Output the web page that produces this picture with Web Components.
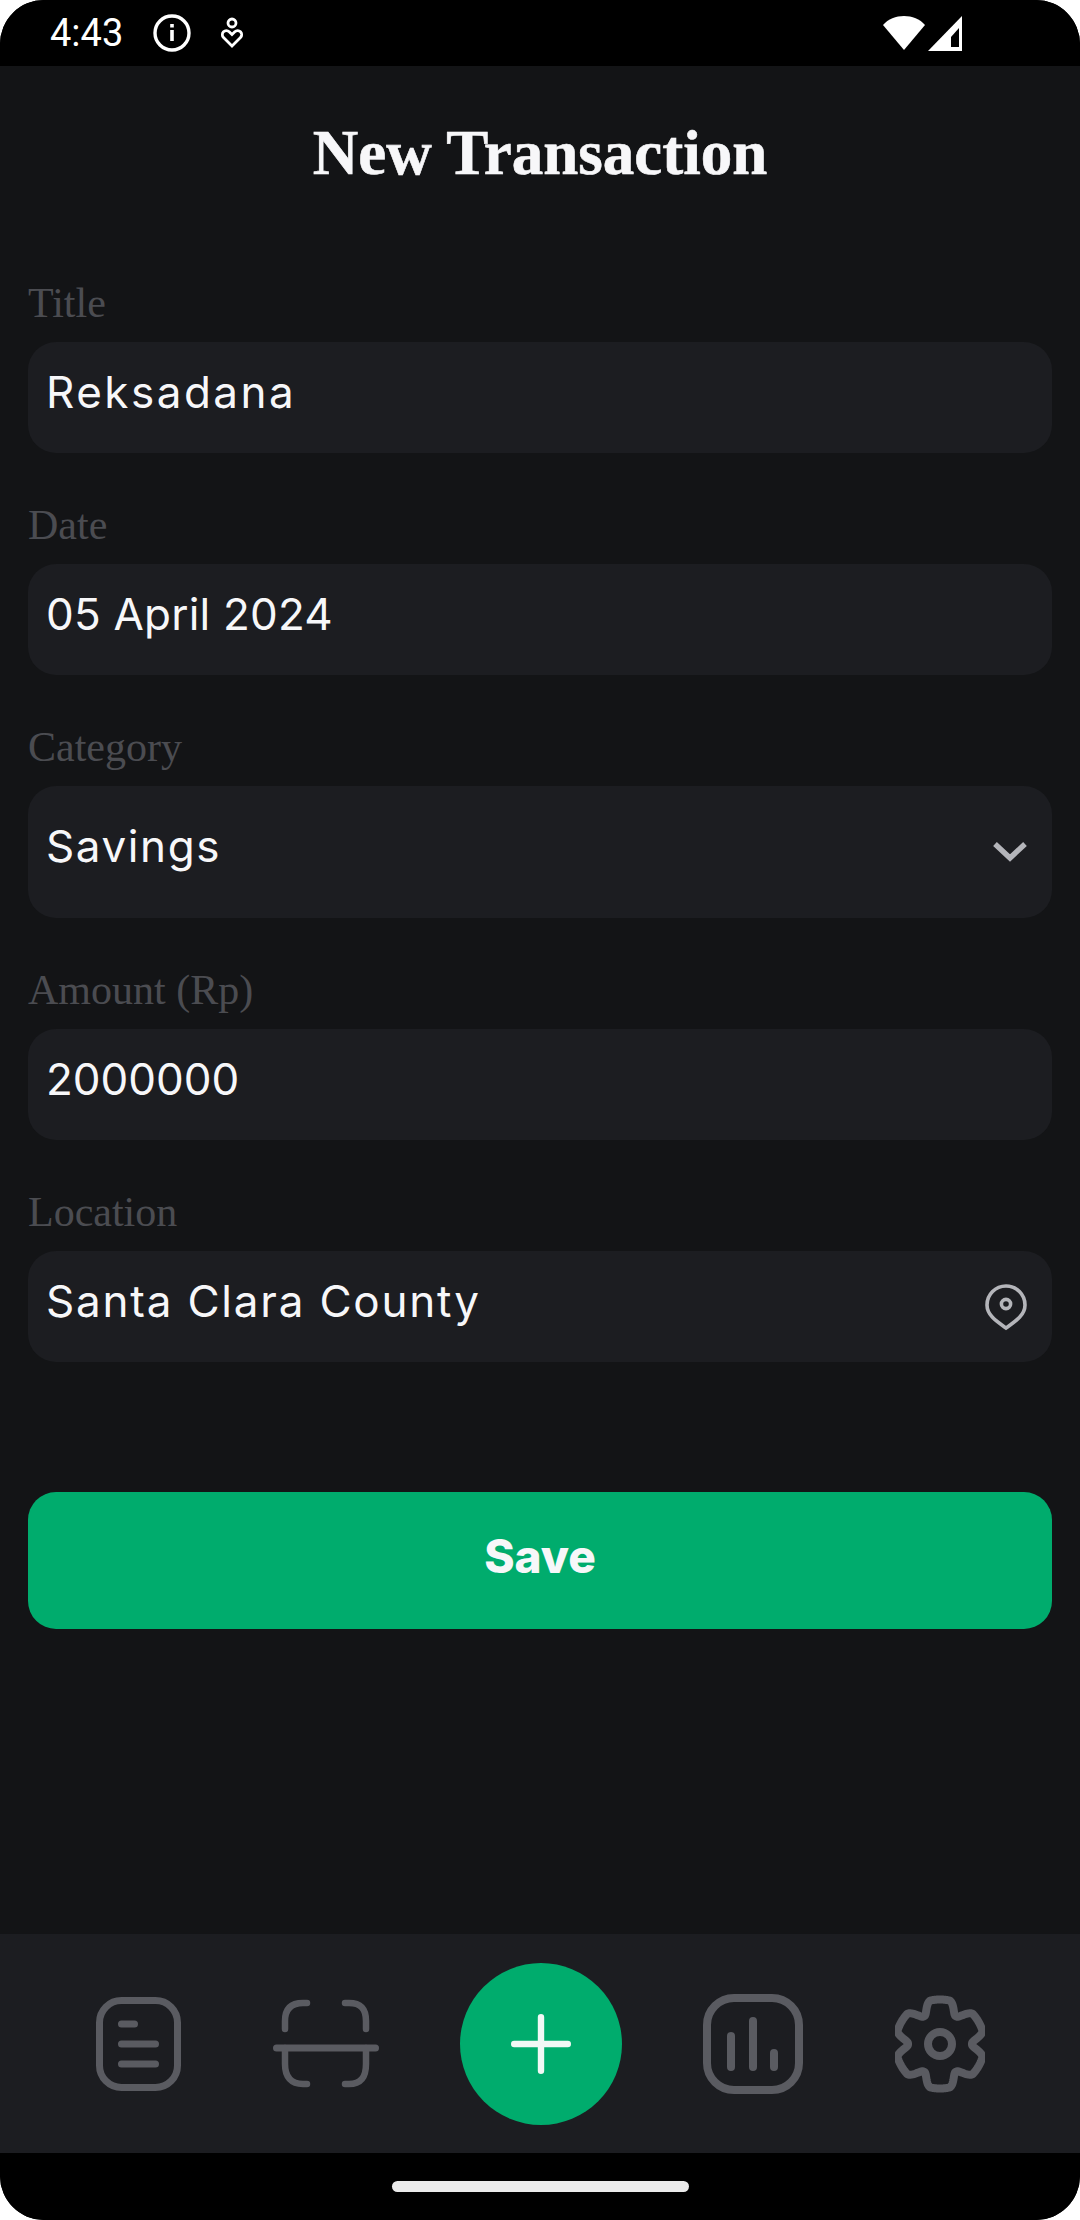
<!DOCTYPE html>
<html>
<head>
<meta charset="utf-8">
<title>New Transaction</title>
<style>
  html, body { margin: 0; padding: 0; background: #fff; }
  body { width: 1080px; height: 2220px; font-family: "Liberation Sans", sans-serif; }
</style>
</head>
<body>
<phone-frame>
  <status-bar slot="top"></status-bar>
  <screen-title>New Transaction</screen-title>
  <form-field label="Title" value="Reksadana" style="--tracking:2.5px"></form-field>
  <form-field label="Date" value="05 April 2024" style="--tracking:.2px"></form-field>
  <form-field label="Category" value="Savings" kind="select" style="--tracking:1.6px"></form-field>
  <form-field label="Amount (Rp)" value="2000000"></form-field>
  <form-field label="Location" value="Santa Clara County" kind="location" style="--tracking:1.8px"></form-field>
  <save-button>Save</save-button>
  <bottom-nav slot="bottom"></bottom-nav>
</phone-frame>

<script>
class PhoneFrame extends HTMLElement {
  constructor() {
    super();
    this.attachShadow({ mode: 'open' });
    this.shadowRoot.innerHTML = `
      <style>
        :host {
          display: flex;
          flex-direction: column;
          width: 1080px;
          height: 2220px;
          background: #000;
          border-radius: 44px;
          overflow: hidden;
        }
        .content {
          flex: 1;
          background: #131416;
          padding: 0 28px;
          display: flex;
          flex-direction: column;
        }
        .home {
          height: 67px;
          background: #000;
          display: flex;
          justify-content: center;
          padding-top: 28px;
          box-sizing: border-box;
        }
        .home div {
          width: 297px;
          height: 11px;
          border-radius: 6px;
          background: #ebebeb;
        }
      </style>
      <slot name="top"></slot>
      <div class="content"><slot></slot></div>
      <slot name="bottom"></slot>
      <div class="home"><div></div></div>
    `;
  }
}

class StatusBar extends HTMLElement {
  constructor() {
    super();
    this.attachShadow({ mode: 'open' });
    this.shadowRoot.innerHTML = `
      <style>
        :host {
          display: flex;
          align-items: center;
          height: 66px;
          padding: 0 118px 0 50px;
          background: #000;
          color: #fff;
          font: 400 38px Roboto, sans-serif;
        }
        svg { display: block; }
        .time { width: 102px; }
        .right { margin-left: auto; display: flex; align-items: center; gap: 3px; }
      </style>
      <span class="time">4:43</span>
      <svg width="40" height="40" viewBox="0 0 40 40" fill="none" stroke="#fff">
        <circle cx="20" cy="20" r="17" stroke-width="3.4"/>
        <path d="M20 17v11" stroke-width="3.6"/>
        <path d="M20 11v3.4" stroke-width="3.6"/>
      </svg>
      <svg width="24" height="32" viewBox="0 0 24 32" fill="none" stroke="#fff" stroke-width="2.8" style="margin-left:28px">
        <circle cx="12" cy="6" r="4"/>
        <path d="M12 29 3.5 20.5a4 4 0 0 1 5.7-5.7L12 17.5l2.8-2.7a4 4 0 0 1 5.7 5.7Z"/>
      </svg>
      <div class="right">
        <svg width="42" height="34" viewBox="0 0 42 34"><path d="M0 9C5 3 13 0 21 0s16 3 21 9L21 34Z" fill="#fff"/></svg>
        <svg width="34" height="35" viewBox="0 0 34 35"><path d="M34 0v35H0Z" fill="#fff"/><path d="M23 21 31 12V31H23Z" fill="#000"/></svg>
      </div>
    `;
  }
}

class ScreenTitle extends HTMLElement {
  constructor() {
    super();
    this.attachShadow({ mode: 'open' });
    this.shadowRoot.innerHTML = `
      <style>
        :host {
          display: block;
          text-align: center;
          color: #f7f7f9;
          font: 700 63px/72px "Liberation Serif", serif;
          -webkit-text-stroke: .6px #f7f7f9;
          padding-top: 51px;
          height: 165px;
        }
      </style>
      <slot></slot>
    `;
  }
}

class FormField extends HTMLElement {
  constructor() {
    super();
    this.attachShadow({ mode: 'open' });
  }

  connectedCallback() {
    const kind = this.getAttribute('kind');
    let icon = '';
    if (kind === 'select') {
      icon = `<svg class="chev" width="36" height="24" viewBox="0 0 36 24" fill="none" stroke="#b4b5ba" stroke-width="5.4"><path d="M3 4 18 18 33 4"/></svg>`;
    } else if (kind === 'location') {
      icon = `<svg class="pin" width="44" height="48" viewBox="0 0 44 48" fill="none" stroke="#b4b5ba" stroke-width="3.6"><path d="M22 45C12 38 3 32 3 22a19 19 0 0 1 38 0c0 10-9 16-19 23Z"/><circle cx="22" cy="21" r="4.6"/></svg>`;
    }
    this.shadowRoot.innerHTML = `
      <style>
        :host {
          display: block;
          margin-bottom: 51px;
        }
        .label {
          color: #4b4c51;
          font: 400 42px/42px "Liberation Serif", serif;
          height: 42px;
          margin-bottom: 18px;
        }
        .box {
          display: flex;
          justify-content: space-between;
          align-items: center;
          min-height: 111px;
          box-sizing: border-box;
          background: #1c1d21;
          border-radius: 28px;
          padding: 0 24px 0 18px;
          color: #f7f7f9;
          font: 400 44px/60px Inter, sans-serif;
          letter-spacing: var(--tracking, 0);
        }
        .box span { align-self: flex-start; padding-top: 20px; }
        :host([kind="select"]) .box { min-height: 132px; }
        :host([kind="select"]) .box span { padding-top: 30px; }
      </style>
      <div class="label">${this.getAttribute('label')}</div>
      <div class="box"><span>${this.getAttribute('value')}</span>${icon}</div>
    `;
  }
}

class SaveButton extends HTMLElement {
  constructor() {
    super();
    this.attachShadow({ mode: 'open' });
    this.shadowRoot.innerHTML = `
      <style>
        :host {
          display: flex;
          justify-content: center;
          align-items: center;
          box-sizing: border-box;
          height: 137px;
          margin-top: 79px;
          padding-bottom: 10px;
          background: #00ac6d;
          border-radius: 28px;
          color: #f7f7f9;
          font: 800 46px/1 Inter, sans-serif;
        }
      </style>
      <slot></slot>
    `;
  }
}

// six flat-topped lobes with short flanks, one lobe straight up
function gearPath(cx, cy) {
  const pts = [];
  for (let i = 0; i < 360; i++) {
    const deg = (i + 30) % 60 - 30;
    const t = Math.min(1, Math.max(0, (29 - Math.abs(deg)) / 17));
    const r = 32 + 12.5 * t * t * (3 - 2 * t);
    const a = i * Math.PI / 180;
    pts.push((cx + r * Math.sin(a)).toFixed(2) + ' ' + (cy - r * Math.cos(a)).toFixed(2));
  }
  return 'M' + pts.join('L') + 'Z';
}

class BottomNav extends HTMLElement {
  constructor() {
    super();
    this.attachShadow({ mode: 'open' });
    this.shadowRoot.innerHTML = `
      <style>
        :host {
          display: flex;
          align-items: center;
          height: 219px;
          padding-left: 96px;
          background: #1c1d21;
        }
        svg { display: block; flex: none; }
        .fab {
          width: 162px;
          height: 162px;
          border-radius: 50%;
          background: #00ac6d;
          display: flex;
          align-items: center;
          justify-content: center;
          margin: 0 81px;
        }
      </style>
      <svg width="85" height="94" viewBox="0 0 85 94" fill="none" stroke="#5a5b61" stroke-width="7" stroke-linecap="round">
        <rect x="3.5" y="3.5" width="78" height="87" rx="22"/>
        <path d="M25.5 27h13M25.5 47h34M25.5 67h34"/>
      </svg>
      <svg style="margin-left:92px" width="106" height="90" viewBox="0 0 106 90" fill="none" stroke="#5a5b61" stroke-width="6.5" stroke-linecap="round">
        <path d="M34 4H30C18 4 12 10 12 22V30M72 4h4c12 0 17 6 17 18v8"/>
        <path d="M12 49v16c0 13 6 20 18 20h4M93 49v16c0 13-5 20-17 20h-4"/>
        <path d="M3.5 49h99" stroke-width="7"/>
      </svg>
      <div class="fab">
        <svg width="60" height="60" viewBox="0 0 60 60" fill="none" stroke="#f1f8f5" stroke-width="6.4" stroke-linecap="round">
          <path d="M30 3.2v53.6M3.2 30h53.6"/>
        </svg>
      </div>
      <svg width="100" height="100" viewBox="0 0 100 100" fill="none" stroke="#5a5b61" stroke-width="8" stroke-linecap="round">
        <rect x="4" y="4" width="92" height="92" rx="27"/>
        <path d="M28 42v31M50 27v46M71 59v14"/>
      </svg>
      <svg style="margin-left:92px" width="90" height="98" viewBox="0 0 90 98" fill="none" stroke="#5a5b61" stroke-width="8" stroke-linejoin="round">
        <path d="${gearPath(45, 49)}"/>
        <circle cx="45" cy="49" r="12"/>
      </svg>
    `;
  }
}

customElements.define('phone-frame', PhoneFrame);
customElements.define('status-bar', StatusBar);
customElements.define('screen-title', ScreenTitle);
customElements.define('form-field', FormField);
customElements.define('save-button', SaveButton);
customElements.define('bottom-nav', BottomNav);
</script>
</body>
</html>
